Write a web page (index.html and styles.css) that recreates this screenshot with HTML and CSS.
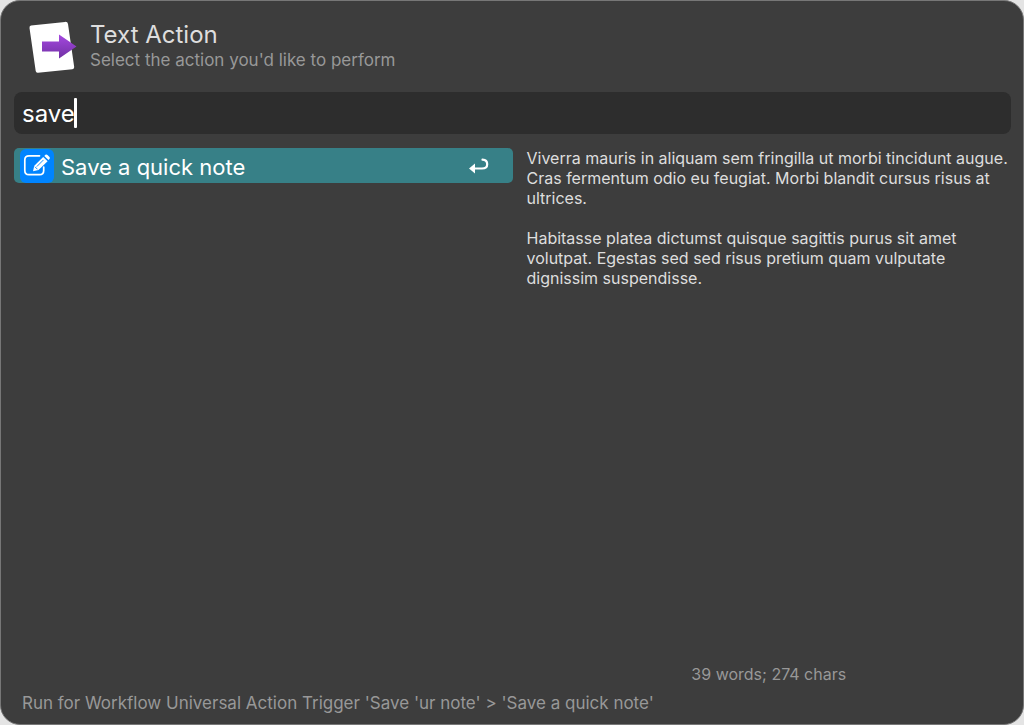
FILE: index.html
```html
<!DOCTYPE html>
<html lang="en">
<head>
<meta charset="utf-8">
<meta name="viewport" content="width=device-width, initial-scale=1">
<title>Text Action</title>
<link rel="stylesheet" href="styles.css">
</head>
<body>
<main class="window">
  <header class="header">
    <svg class="app-icon" viewBox="0 0 50 54" aria-hidden="true">
      <defs>
        <linearGradient id="arrow" x1="0" y1="0" x2="0" y2="1">
          <stop offset="0" stop-color="#a548e0"/>
          <stop offset="1" stop-color="#7131a4"/>
        </linearGradient>
      </defs>
      <path d="M3 5.500 37 1.900Q39.600 1.600 40 4L46.200 47Q46.400 48.800 44.400 49.200L10 52.700Q8 53 7.700 51L1.500 8Q1.300 5.700 3 5.500Z" fill="#fff"/>
      <path d="M14 21.500H31V14.500L48.500 26.500 31 38.500V31.500H14Z" fill="url(#arrow)"/>
    </svg>
    <div class="heading">
      <h1 class="title">Text Action</h1>
      <p class="subtitle">Select the action you'd like to perform</p>
    </div>
  </header>

  <label class="search">
    <input class="search-input" type="text" size="4" value="save" aria-label="Search actions">
    <span class="caret" aria-hidden="true"></span>
  </label>

  <div class="content">
    <div class="results">
      <button class="result" type="button">
        <svg class="note-icon" viewBox="0 0 34 34" aria-hidden="true">
          <rect width="34" height="34" rx="6" fill="#0084ff"/>
          <path d="M19.500 6.800H9Q4.800 6.800 4.800 11V21.500Q4.800 25.700 9 25.700H19.500Q23.700 25.700 23.700 21.500V18" fill="none" stroke="#fff" stroke-width="1.700" stroke-linecap="round"/>
          <path d="M13 22.200 14.300 16.800 23.200 7.900 27.600 12.300 18.500 21Z" fill="#fff"/>
          <path d="M24.300 6.900 25.400 5.800Q26.500 5 27.500 5.900L29.500 7.900Q30.300 8.900 29.500 10L28.500 11.100Z" fill="#fff"/>
          <path d="M16.800 17.600 23.500 10.900M15 17.800 17.500 20.300" stroke="#0084ff" stroke-width=".9"/>
        </svg>
        <span class="result-name">Save a quick note</span>
        <svg class="return-icon" viewBox="0 0 20 16" aria-hidden="true">
          <path d="M0 10.500 6 5.500V15.500Z" fill="#fff"/>
          <path d="M5 10.500H13Q18.200 10.500 18.200 6.200T13.500 1.700" fill="none" stroke="#fff" stroke-width="2.200" stroke-linecap="round"/>
        </svg>
      </button>
    </div>
    <section class="preview" aria-label="Selected text">
      <div class="preview-text">
        <p>Viverra mauris in aliquam sem fringilla ut morbi tincidunt augue. Cras fermentum odio eu feugiat. Morbi blandit cursus risus at ultrices.</p>
        <p>Habitasse platea dictumst quisque sagittis purus sit amet volutpat. Egestas sed sed risus pretium quam vulputate dignissim suspendisse.</p>
      </div>
      <p class="counts">39 words; 274 chars</p>
    </section>
  </div>

  <footer class="status">Run for Workflow Universal Action Trigger 'Save 'ur note' &gt; 'Save a quick note'</footer>
</main>
</body>
</html>
```
FILE: styles.css
```css
* { box-sizing: border-box; }

body {
  margin: 0;
  background: #e4e4e4;
  font-family: Inter, "Liberation Sans", sans-serif;
}

h1, p { margin: 0; }

.window {
  display: flex;
  flex-direction: column;
  min-height: 100vh;
  padding: 19px 12px 9px 13px;
  border: 1px solid #777;
  border-radius: 20px;
  background: #3d3d3d;
  color: #dedede;
}

.header {
  display: flex;
  gap: 12px;
  height: 72px;
  padding-left: 14px;
}

.app-icon {
  width: 50px;
  height: 54px;
}

.title {
  font-size: 24px;
  font-weight: 400;
  line-height: 30px;
}

.subtitle {
  font-size: 17px;
  line-height: 20px;
  color: #989898;
}

.search {
  display: flex;
  align-items: center;
  height: 42px;
  padding: 0 8px;
  border-radius: 8px;
  background: #2d2d2d;
}

.search-input {
  field-sizing: content;
  padding: 2px 0 0;
  border: 0;
  outline: 0;
  background: none;
  color: #fff;
  font: 400 24px/32px Inter, "Liberation Sans", sans-serif;
  caret-color: transparent;
}

.caret {
  width: 3px;
  height: 30px;
  margin-left: -1px;
  border-radius: 1px;
  background: #fff;
}

.content {
  display: grid;
  grid-template-columns: 1fr 1fr;
  flex: 1;
  padding-top: 14px;
}

.result {
  display: flex;
  align-items: center;
  gap: 7px;
  width: 100%;
  height: 35px;
  padding: 0 24px 0 6px;
  border: 0;
  border-radius: 5px;
  background: #378087;
  color: #fff;
  font: 400 22px/32px Inter, "Liberation Sans", sans-serif;
  text-align: left;
}

.note-icon {
  width: 34px;
  height: 34px;
}

.result-name {
  flex: 1;
  padding-top: 2px;
}

.return-icon {
  width: 20px;
  height: 16px;
}

.preview {
  display: flex;
  flex-direction: column;
  justify-content: space-between;
  padding-left: 14px;
}

.preview-text {
  display: grid;
  gap: 20px;
  font-size: 16px;
  line-height: 20px;
}

.counts {
  font-size: 16px;
  line-height: 20px;
  text-align: center;
  color: #989898;
}

.status {
  padding: 7px 8px 0;
  font-size: 17px;
  line-height: 24px;
  color: #989898;
}
```
